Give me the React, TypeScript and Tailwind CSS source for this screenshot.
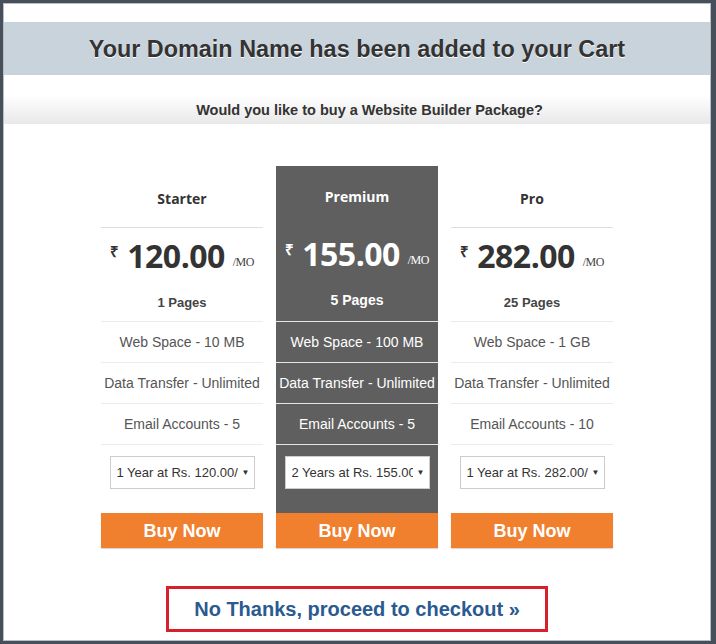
import { ReactNode } from "react";

type Plan = {
  name: string;
  price: string;
  pages: string;
  space: string;
  transfer: string;
  email: string;
  term: string;
  featured?: boolean;
};

const plans: Plan[] = [
  {
    name: "Starter",
    price: "120.00",
    pages: "1 Pages",
    space: "Web Space - 10 MB",
    transfer: "Data Transfer - Unlimited",
    email: "Email Accounts - 5",
    term: "1 Year at Rs. 120.00/mo",
  },
  {
    name: "Premium",
    price: "155.00",
    pages: "5 Pages",
    space: "Web Space - 100 MB",
    transfer: "Data Transfer - Unlimited",
    email: "Email Accounts - 5",
    term: "2 Years at Rs. 155.00/mo",
    featured: true,
  },
  {
    name: "Pro",
    price: "282.00",
    pages: "25 Pages",
    space: "Web Space - 1 GB",
    transfer: "Data Transfer - Unlimited",
    email: "Email Accounts - 10",
    term: "1 Year at Rs. 282.00/mo",
  },
];

function Row({ children, featured }: { children: ReactNode; featured?: boolean }) {
  return (
    <div
      className={
        "h-[41px] flex items-center justify-center pt-[1px] border-b text-[14px] whitespace-nowrap " +
        (featured ? "border-[#e6e6e6] text-white" : "border-[#ececec] text-[#555]")
      }
    >
      {children}
    </div>
  );
}

function PlanColumn({ plan }: { plan: Plan }) {
  const f = plan.featured;
  return (
    <div className="w-[162px] flex flex-col">
      <div className={f ? "bg-[#5f5f5f]" : "bg-white"}>
        {/* NAME */}
        <div
          className={
            "h-[62px] flex items-center justify-center border-b font-['Open_Sans',sans-serif] font-bold text-[14px] " +
            (f ? "border-[#5f5f5f] text-white" : "border-[#dedede] text-[#333] pt-[4px]")
          }
        >
          {plan.name}
        </div>

        {/* PRICE */}
        <div
          className={
            "border-b " + (f ? "border-[#e6e6e6] -mt-[2px] pb-[2px]" : "border-[#ececec]")
          }
        >
          <div className="h-[56px] flex items-center justify-center">
            <span
              className={
                "self-start mt-[12px] mr-[8px] text-[15px] font-['Open_Sans',sans-serif] font-bold " +
                (f ? "text-white" : "text-[#333]")
              }
            >
              ₹
            </span>
            <span
              className={
                "font-['Open_Sans',sans-serif] font-bold text-[32px] leading-none tracking-[-0.5px] " +
                (f ? "text-white" : "text-[#333]")
              }
            >
              {plan.price}
            </span>
            <span
              className={
                "self-end mb-[13px] ml-[8px] font-['Liberation_Serif',serif] text-[12px] tracking-[-0.6px] " +
                (f ? "text-white" : "text-[#444]")
              }
            >
              /MO
            </span>
          </div>
          <div
            className={
              "h-[37px] flex items-center justify-center font-['Liberation_Sans',Arial,sans-serif] font-bold " +
              (f ? "text-white text-[14px]" : "text-[#444] text-[13px]")
            }
          >
            {plan.pages}
          </div>
        </div>

        {/* FEATURES */}
        <Row featured={f}>{plan.space}</Row>
        <Row featured={f}>{plan.transfer}</Row>
        <Row featured={f}>{plan.email}</Row>

        {/* TERM SELECT */}
        <div className="h-[68px] pt-[11px]">
          <div className="w-[145px] h-[33px] mx-auto bg-white border border-[#ccc] flex items-center pl-[6px] pr-[4px] text-[13px] text-[#333]">
            <span className="flex-1 overflow-hidden whitespace-nowrap">{plan.term}</span>
            <span className="ml-[4px] text-[8px]">▼</span>
          </div>
        </div>
      </div>

      <button className="h-[35px] bg-[#f07f2e] text-white font-bold text-[18px] pt-[2px] shadow-[0_1px_1px_rgba(0,0,0,0.15)]">
        Buy Now
      </button>
    </div>
  );
}

export default function App() {
  return (
    <div className="w-[716px] h-[644px] bg-[#47505a] p-[3px] font-['Liberation_Sans',Arial,sans-serif]">
      <div className="w-[708px] h-[638px] bg-white border border-[#b9bec4] flex flex-col items-center">
        {/* HEADER */}
        <div className="mt-[18px] w-full h-[53px] bg-[#c8d3dc] flex items-center justify-center">
          <h1 className="text-[23.4px] font-bold text-[#333] pt-[2px] [text-shadow:0_1px_0_#fff]">
            Your Domain Name has been added to your Cart
          </h1>
        </div>

        <div className="mt-[20px] w-full h-[29px] bg-gradient-to-b from-white to-[#e8e8e8] flex items-center justify-center pl-[25px]">
          <h2 className="text-[14.5px] font-bold text-[#333] pt-[3px]">
            Would you like to buy a Website Builder Package?
          </h2>
        </div>

        {/* PLANS */}
        <div className="mt-[42px] flex gap-[13px]">
          {plans.map((p) => (
            <PlanColumn key={p.name} plan={p} />
          ))}
        </div>

        {/* SKIP */}
        <div className="mt-[38px] w-[382px] h-[46px] border-[3px] border-[#d7202b] flex items-center justify-center">
          <a className="text-[20px] font-bold text-[#2a5a90] cursor-pointer">
            No Thanks, proceed to checkout »
          </a>
        </div>
      </div>
    </div>
  );
}
